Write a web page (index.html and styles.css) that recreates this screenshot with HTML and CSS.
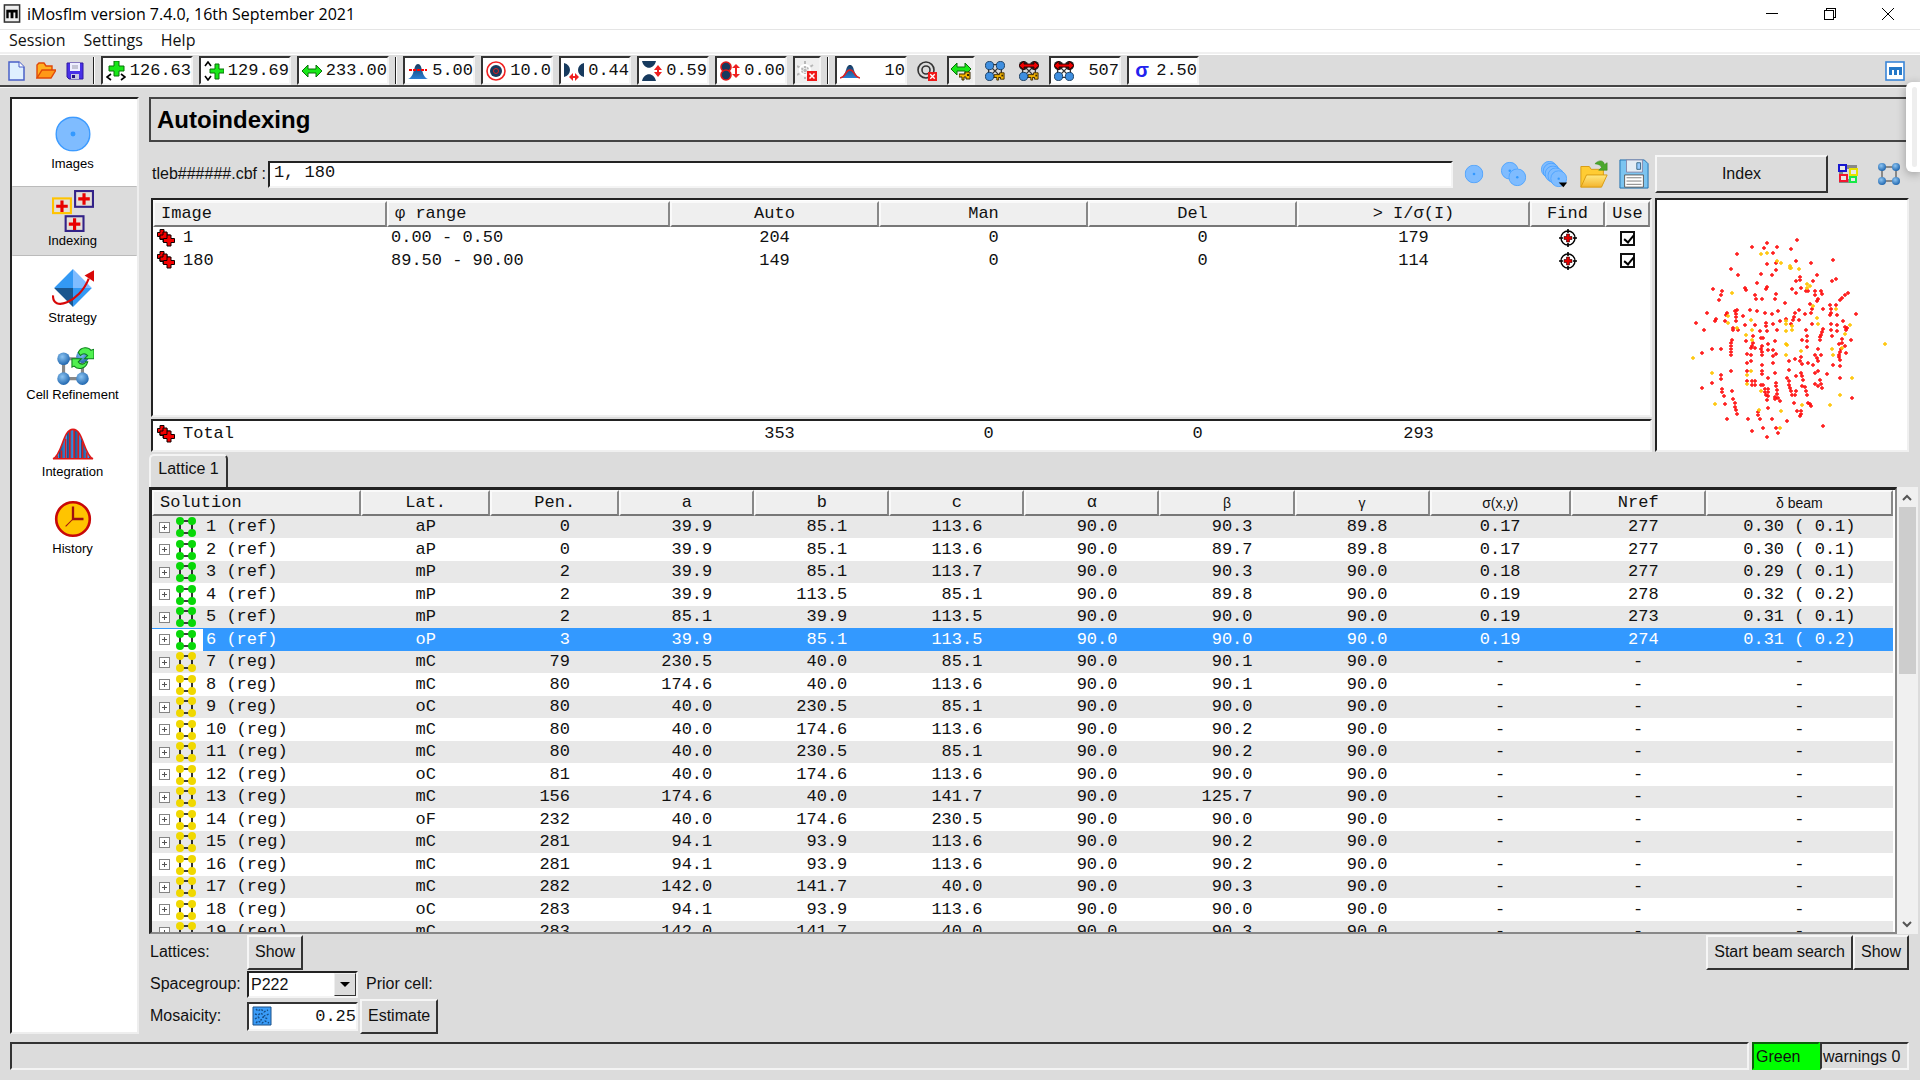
FILE: index.html
```html
<!DOCTYPE html>
<html lang="en">
<head>
    <meta charset="UTF-8">
    <meta name="viewport" content="width=device-width, initial-scale=1.0">
    <title>iMosflm version 7.4.0, 16th September 2021</title>
    <link rel="stylesheet" href="styles.css">
</head>
<body>
    <!-- Shared icons -->
    <svg class="sprite" aria-hidden="true">
        <defs>
            <radialGradient id="ball" cx="40%" cy="35%" r="65%">
                <stop offset="0" stop-color="#8cc4f2"/>
                <stop offset="1" stop-color="#2268b0"/>
            </radialGradient>
            <linearGradient id="hill" x1="0" y1="0" x2="0" y2="1">
                <stop offset="0" stop-color="#173a5e"/>
                <stop offset="1" stop-color="#2b7fd4"/>
            </linearGradient>
            <linearGradient id="stripes" x1="0" y1="0" x2="7" y2="0" gradientUnits="userSpaceOnUse" spreadMethod="repeat">
                <stop offset="0" stop-color="#1c4a80"/>
                <stop offset="1" stop-color="#3a9cf4"/>
            </linearGradient>
            <linearGradient id="gold" x1="0" y1="0" x2="0" y2="1">
                <stop offset="0" stop-color="#ffe980"/>
                <stop offset="1" stop-color="#f4b42c"/>
            </linearGradient>
        </defs>
        <symbol id="i-spots" viewBox="0 0 18 18">
            <g fill="#f40000" stroke="#100" stroke-width="1">
                <path d="M3 .5h4v3h3v4H7v3H3v-3H.5v-4H3z"/>
                <path d="M6 3h4v3h3v4h-3v3H6v-3H3V6h3z"/>
                <path d="M10 6h4v3.500h3.500v4H14V17h-4v-3.500H6.500v-4H10z"/>
            </g>
        </symbol>
        <symbol id="i-target" viewBox="0 0 18 18">
            <circle cx="9" cy="9" r="7" fill="none" stroke="#000" stroke-width="1.400"/>
            <path d="M9 0v4M9 14v4M0 9h4M14 9h4" stroke="#000" stroke-width="1.600"/>
            <path d="M7.500 5h3v2.500H13v3h-2.500V13h-3v-2.500H5v-3h2.500z" fill="#e00000" stroke="#200" stroke-width=".6"/>
        </symbol>
        <symbol id="i-lattice" viewBox="0 0 20 20">
            <path d="M4 4h12v12H4z" fill="none" stroke="#000" stroke-width="1.600"/>
            <g fill="currentColor"><circle cx="4" cy="4" r="4"/><circle cx="16" cy="4" r="4"/><circle cx="4" cy="16" r="4"/><circle cx="16" cy="16" r="4"/></g>
        </symbol>
        <symbol id="i-plus" viewBox="0 0 11 11">
            <rect x=".5" y=".5" width="10" height="10" fill="#fff" stroke="#848484"/>
            <path d="M3 5.500h5M5.500 3v5" stroke="#555"/>
        </symbol>
        <symbol id="i-disc" viewBox="0 0 36 36">
            <circle cx="18" cy="18" r="17" fill="#7fbcff" stroke="#3d9bff" stroke-width="1.500"/>
            <circle cx="18" cy="18" r="2.500" fill="#3399ff"/>
        </symbol>
        <symbol id="i-cell" viewBox="0 0 22 22">
            <path d="M4 4h14v14H4z" fill="none" stroke="#888" stroke-width="2"/>
            <g fill="url(#ball)"><circle cx="4" cy="4" r="4"/><circle cx="18" cy="4" r="4"/><circle cx="4" cy="18" r="4"/><circle cx="18" cy="18" r="4"/></g>
        </symbol>
        <symbol id="i-key" viewBox="0 0 12 10">
            <path d="M0 3h6V1h5v7H7V6H5v3H3V6H0z" fill="#f4b400" stroke="#3a2800"/>
            <path d="M8 3h2v2H8z" fill="#3a2800"/>
        </symbol>
        <symbol id="i-redx" viewBox="0 0 10 10">
            <path d="M0 0h10v10H0z" fill="#f01818"/>
            <path d="M2.500 2.500l5 5M7.500 2.500l-5 5" stroke="#fff" stroke-width="1.500"/>
        </symbol>
        <symbol id="i-redarrow" viewBox="0 0 20 9">
            <path d="M0 4.500L5 0v3h10V0l5 4.500L15 9V6H5v3z" fill="#f00000" stroke="#300"/>
        </symbol>
    </svg>

    <header class="titlebar">
        <svg class="app-icon" viewBox="0 0 18 20"><rect x="1" y="1" width="16" height="18" fill="#eee" stroke="#333" stroke-width="1.600"/><path d="M3 6h12v9h-2.500V9h-2v6h-3V9h-2v6H3z"/></svg>
        <span class="title">iMosflm version 7.4.0, 16th September 2021</span>
        <div class="window-buttons">
            <button aria-label="Minimize"><svg viewBox="0 0 12 12"><path d="M0 5.500h12"/></svg></button>
            <button aria-label="Restore"><svg viewBox="0 0 12 12"><path d="M.5 2.500h9v9h-9zM2.500 2.500v-2h9v9h-2"/></svg></button>
            <button aria-label="Close"><svg viewBox="0 0 12 12"><path d="M0 0l12 12M12 0L0 12"/></svg></button>
        </div>
    </header>

    <nav class="menubar">
        <a href="#">Session</a>
        <a href="#">Settings</a>
        <a href="#">Help</a>
    </nav>

    <div class="toolbar">
        <div class="file-tools">
            <button aria-label="New"><svg viewBox="0 0 20 20"><path d="M2 1h10l5 5v13H2z" fill="#dff0ff" stroke="#4a60c8" stroke-width="1.500"/><path d="M12 1v5h5" fill="#fff" stroke="#4a60c8"/></svg></button>
            <button aria-label="Open"><svg viewBox="0 0 20 20"><path d="M1 17V4l2-2h5l2 3h6v4" fill="#ffb020" stroke="#e04808" stroke-width="1.400"/><path d="M1 17L6 9h14l-5 8z" fill="#ff9818" stroke="#e04808" stroke-width="1.400"/></svg></button>
            <button aria-label="Save"><svg viewBox="0 0 20 20"><path d="M2 2h16v16H4l-2-2z" fill="#4830e8" stroke="#3018a0"/><path d="M5 2h10v8H5z" fill="#eef"/><path d="M7 5h6M7 7h6" stroke="#99a"/><path d="M6 13h8v5H6z" fill="#c8c8e0"/><path d="M7 14h3v3H7z" fill="#221080"/></svg></button>
        </div>
        <div class="separator"></div>
        <label class="entry wide"><svg viewBox="0 0 20 20"><path d="M8 0h5v5h5v5h-5v5H8v-5H3V5h5z" fill="#18e818" stroke="#087008"/><path d="M5 13l-4 3 4 3M15 13l4 3-4 3" fill="none" stroke="#000" stroke-width="1.600"/></svg><input aria-label="Beam x" value="126.63"></label>
        <label class="entry wide"><svg viewBox="0 0 20 20"><path d="M11 3h4v5h5v4h-5v6h-4v-6H6V8h5z" fill="#18e818" stroke="#087008"/><path d="M1 5l3-4 3 4M1 15l3 4 3-4" fill="none" stroke="#000" stroke-width="1.600"/></svg><input aria-label="Beam y" value="129.69"></label>
        <label class="entry wide"><svg viewBox="0 0 20 20"><path d="M0 10l6-6v4h8V4l6 6-6 6v-4H6v4z" fill="#18e818" stroke="#087008"/></svg><input aria-label="Distance" value="233.00"></label>
        <div class="separator"></div>
        <label class="entry"><svg viewBox="0 0 20 20"><path d="M0 18c7-2 5-15 10-15s3 13 10 15z" fill="url(#hill)"/><path d="M1 9h18" stroke="#f00" stroke-width="2" stroke-dasharray="3 1"/></svg><input aria-label="Threshold" value="5.00"></label>
        <label class="entry"><svg viewBox="0 0 20 20"><circle cx="10" cy="10" r="9" fill="#fff" stroke="#f02020" stroke-width="1.600"/><circle cx="10" cy="10" r="6" fill="#173a5e"/><circle cx="10" cy="10" r="2.500" fill="none" stroke="#e02020"/></svg><input aria-label="Radius" value="10.0"></label>
        <label class="entry"><svg viewBox="0 0 20 20"><path d="M0 2c8 2 8 12 0 14zM20 2c-8 2-8 12 0 14z" fill="#173a5e"/><path d="M5 16l4-4v3h2v-3l4 4-4 4v-3H9v3z" fill="#f02020"/></svg><input aria-label="Separation x" value="0.44"></label>
        <label class="entry"><svg viewBox="0 0 20 20"><path d="M0 0h14c-2 9-12 9-14 0zM0 20h14c-2-9-12-9-14 0z" fill="#173a5e"/><path d="M16 4l4 5h-3v2h3l-4 5-4-5h3V9h-3z" fill="#f02020"/></svg><input aria-label="Separation y" value="0.59"></label>
        <label class="entry"><svg viewBox="0 0 20 20"><g fill="#173a5e" stroke="#e01818" stroke-width="1.600"><circle cx="6" cy="6" r="5"/><circle cx="6" cy="14" r="5"/></g><path d="M16 3l4 4h-3v6h3l-4 4-4-4h3V7h-3z" fill="#f02020"/></svg><input aria-label="Overlap" value="0.00"></label>
        <button class="tool pressed" aria-label="Ice rings"><svg viewBox="0 0 20 20"><g stroke="#b8b8b8" stroke-width="2" stroke-dasharray="3 1"><path d="M8 0v18M0 5l16 9M16 4L0 14"/></g><circle cx="8" cy="9" r="5" fill="none" stroke="#fff" stroke-width="2"/><use href="#i-redx" x="10" y="10" width="10" height="10"/></svg></button>
        <div class="separator"></div>
        <label class="entry"><svg viewBox="0 0 20 20"><path d="M0 17c7-2 5-13 10-13s3 11 10 13z" fill="url(#hill)"/><path d="M0 17c7-2 5-8 10-8s3 6 10 8" fill="none" stroke="#e02020" stroke-width="1.600"/></svg><input aria-label="Spot count" value="10"></label>
        <button class="tool" aria-label="Rings"><svg viewBox="0 0 20 20"><circle cx="9" cy="9" r="8" fill="none" stroke="#333" stroke-width="1.600"/><circle cx="9" cy="9" r="4" fill="none" stroke="#333" stroke-width="1.600"/><use href="#i-redx" x="11" y="11" width="9" height="9"/></svg></button>
        <button class="tool pressed" aria-label="Fix distance"><svg viewBox="0 0 20 20"><path d="M0 8l6-6v4h8V2l6 6-6 6v-4H6v4z" fill="#18e818" stroke="#087008"/><use href="#i-key" x="8" y="10" width="12" height="10"/></svg></button>
        <button class="tool" aria-label="Fix cell"><svg viewBox="0 0 22 22"><path d="M4 4h14v14H4zM4 4l14 14M4 18L18 4" fill="none" stroke="#333" stroke-width="1.500"/><g fill="#3f8fe0" stroke="#173a5e"><circle cx="5" cy="5" r="4.500"/><circle cx="17" cy="5" r="4.500"/><circle cx="5" cy="17" r="4.500"/></g><use href="#i-key" x="10" y="12" width="12" height="10"/></svg></button>
        <button class="tool" aria-label="Fix max cell"><svg viewBox="0 0 22 22"><path d="M4 4h14v14H4zM4 4l14 14M4 18L18 4" fill="none" stroke="#333" stroke-width="1.500"/><g fill="#3f8fe0" stroke="#173a5e"><circle cx="5" cy="17" r="4.500"/></g><g fill="#222"><circle cx="5" cy="5" r="5"/><circle cx="17" cy="5" r="5"/></g><use href="#i-redarrow" x="0" y="0" width="22" height="10"/><use href="#i-key" x="10" y="12" width="12" height="10"/></svg></button>
        <label class="entry"><svg viewBox="0 0 22 22"><path d="M4 4h14v14H4zM4 4l14 14M4 18L18 4" fill="none" stroke="#333" stroke-width="1.500"/><g fill="#3f8fe0" stroke="#173a5e"><circle cx="5" cy="17" r="4.500"/><circle cx="17" cy="17" r="4.500"/></g><g fill="#222"><circle cx="5" cy="5" r="5"/><circle cx="17" cy="5" r="5"/></g><use href="#i-redarrow" x="0" y="0" width="22" height="10"/></svg><input aria-label="Max cell edge" value="507"></label>
        <label class="entry"><span class="sigma">σ</span><input aria-label="Sigma cutoff" value="2.50"></label>
        <svg class="mosflm-logo" viewBox="0 0 20 20"><rect x="1" y="1" width="18" height="18" fill="#fff" stroke="#3a86d8" stroke-width="1.600"/><path d="M4 6h13v8h-3V9h-2v5H9V9H7v5H4z" fill="#2478c8"/></svg>
    </div>

    <div class="workspace">
        <nav class="sidebar">
            <a class="stage" href="#"><svg viewBox="0 0 40 40"><use href="#i-disc" x="3" y="3" width="34" height="34"/></svg>Images</a>
            <a class="stage active" href="#"><svg viewBox="0 0 40 40"><g fill="#e4dfd8" stroke-width="2"><rect x="1" y="8" width="17" height="14" stroke="#ffc400"/><rect x="22" y="1" width="17" height="15" stroke="#332288"/><rect x="13" y="25" width="17" height="14" stroke="#332288"/></g><path d="M8 10h3v4h4v3h-4v4H8v-4H4v-3h4zM29 3h3v4h4v3h-4v4h-3v-4h-4V7h4zM20 27h3v4h4v3h-4v4h-3v-4h-4v-3h4z" fill="#e80000"/></svg>Indexing</a>
            <a class="stage" href="#"><svg viewBox="0 0 40 40"><path d="M20 2L2 20h18z" fill="#3399f4"/><path d="M20 2v18h18z" fill="#7fbcff"/><path d="M2 20h18v18z" fill="#1a568e"/><path d="M20 20h18L20 38z" fill="#3399f4"/><path d="M1 27c-1 16 25 7 34-16" fill="none" stroke="#d80808" stroke-width="2"/><path d="M40 3v11l-9-6z" fill="#d80808"/></svg>Strategy</a>
            <a class="stage" href="#"><svg viewBox="0 0 40 40"><path d="M11 14h18v19H11z" fill="none" stroke="#888" stroke-width="3"/><g fill="url(#ball)"><circle cx="11" cy="14" r="6"/><circle cx="29" cy="12" r="6"/><circle cx="11" cy="33" r="6"/><circle cx="29" cy="33" r="6"/></g><path d="M25 8c3-6 10-5 12-2l3-1v9h-9l3-3c-3-3-5-2-7 0zM34 17c-2 7-9 8-13 4l-2 1v-8h9l-3 3c2 3 6 3 7 0z" fill="#50f050" stroke="#088018"/></svg>Cell Refinement</a>
            <a class="stage" href="#"><svg viewBox="0 0 40 40"><path d="M1 36c9-4 9-28 19-28s10 24 19 28z" fill="url(#stripes)" stroke="#e01818" stroke-width="1.500"/><path d="M5 36v-3M9 36v-8M13 36V17M17 36V9M21 36V8M25 36V11M29 36V20M33 36v-6" stroke="#e01818" stroke-width="1.500"/></svg>Integration</a>
            <a class="stage" href="#"><svg viewBox="0 0 40 40"><circle cx="20" cy="20" r="16" fill="#ffc400" stroke="#c80808" stroke-width="2.500"/><path d="M20 8v12h10" fill="none" stroke="#a01010" stroke-width="2.200"/><path d="M20 20l-7 7" stroke="#a01010"/></svg>History</a>
        </nav>

        <main>
            <h1>Autoindexing</h1>

            <div class="image-bar">
                <label for="images">tleb######.cbf :</label>
                <input id="images" value="1, 180">
                <div class="image-tools">
                    <button aria-label="Pick one image"><svg viewBox="0 0 32 32"><use href="#i-disc" x="6" y="6" width="20" height="20"/></svg></button>
                    <button aria-label="Pick two images"><svg viewBox="0 0 32 32"><use href="#i-disc" x="2" y="3" width="19" height="19"/><use href="#i-disc" x="10" y="10" width="19" height="19"/></svg></button>
                    <button aria-label="Pick several images"><svg viewBox="0 0 32 32"><use href="#i-disc" x="2" y="2" width="18" height="18"/><use href="#i-disc" x="4" y="4" width="18" height="18"/><use href="#i-disc" x="6" y="7" width="18" height="18"/><use href="#i-disc" x="9" y="9" width="18" height="18"/><use href="#i-disc" x="12" y="12" width="18" height="18"/><path d="M21 25h9l-4 5z"/></svg></button>
                    <button aria-label="Load spots"><svg viewBox="0 0 32 32"><path d="M2 30V8h9l2 3h13v7" fill="#ffcc33" stroke="#d89a10"/><path d="M2 30l6-13h22l-6 13z" fill="url(#gold)" stroke="#d89a10"/><path d="M17 5c5-5 10-3 10 1l3-2v8h-9l3-3c-1-3-3-3-7-4z" fill="#4aa82c" stroke="#38841c" stroke-width=".6"/></svg></button>
                    <button aria-label="Save spots"><svg viewBox="0 0 32 32"><path d="M1 1h26l4 4v26H1z" fill="#7cc4f0" stroke="#1d6eae"/><path d="M8 1h17v13H8z" fill="#e4ecf4" stroke="#88a"/><path d="M19 4h4v7h-4z" fill="#9cf" stroke="#368"/><path d="M6 17h20v13H6z" fill="#fff" stroke="#555"/><path d="M8 20h16M8 23.500h16M8 27h16" stroke="#777"/></svg></button>
                </div>
                <div class="index-tools">
                    <button class="raised index">Index</button>
                    <button aria-label="Multiple lattices"><svg viewBox="0 0 22 22"><path d="M4 4h14v14H4z" fill="none" stroke="#888" stroke-width="4"/><g fill="#e8e8e8" stroke-width="2"><rect x="2" y="2" width="7" height="6" stroke="#1818d0"/><rect x="13" y="6" width="7" height="6" stroke="#e8e000"/><rect x="3" y="12" width="7" height="6" stroke="#f01830"/><rect x="13" y="14" width="6" height="5" stroke="#18e848"/></g></svg></button>
                    <button class="cell-options" aria-label="Cell options"><svg viewBox="0 0 22 22"><use href="#i-cell" x="0" y="0" width="22" height="22"/></svg></button>
                </div>
            </div>

            <section class="spots">
                <div class="image-lists">
                    <div class="sunken image-list">
                        <table>
                            <colgroup><col class="w234"><col class="w283"><col class="w209"><col class="w209"><col class="w209"><col class="w233"><col class="w75"><col class="w45"></colgroup>
                            <thead><tr><th class="left">Image</th><th class="left">φ range</th><th>Auto</th><th>Man</th><th>Del</th><th>&gt; I/σ(I)</th><th>Find</th><th>Use</th></tr></thead>
                            <tbody>
                                <tr><td class="image"><svg><use href="#i-spots"/></svg>1</td><td class="left">0.00 - 0.50</td><td>204</td><td>  0</td><td>  0</td><td>179</td><td><svg><use href="#i-target"/></svg></td><td><input type="checkbox" aria-label="Use image 1" checked></td></tr>
                                <tr><td class="image"><svg><use href="#i-spots"/></svg>180</td><td class="left">89.50 - 90.00</td><td>149</td><td>  0</td><td>  0</td><td>114</td><td><svg><use href="#i-target"/></svg></td><td><input type="checkbox" aria-label="Use image 180" checked></td></tr>
                            </tbody>
                        </table>
                    </div>
                    <div class="sunken total">
                        <table>
                            <colgroup><col class="w239"><col class="w283"><col class="w209"><col class="w209"><col class="w209"><col class="w233"><col class="w75"><col class="w40"></colgroup>
                            <tbody><tr><td class="image"><svg><use href="#i-spots"/></svg>Total</td><td></td><td>353</td><td>0</td><td>0</td><td>293</td><td></td><td></td></tr></tbody>
                        </table>
                    </div>
                </div>
                <div class="sunken plot">
                    <svg viewBox="0 0 250 250">
                        <path id="spots-used" fill="#ff1010"/>
                        <path id="spots-weak" fill="#ffc400"/>
                    </svg>
                </div>
            </section>

            <div class="tabs"><button class="tab">Lattice 1</button></div>

            <section class="solutions">
                <div class="solution-list">
                    <table>
                        <colgroup><col class="w209"><col class="w129"><col class="w129"><col class="w135"><col class="w135"><col class="w135"><col class="w135"><col class="w135"><col class="w135"><col class="w141"><col class="w135"><col class="w187"></colgroup>
                        <thead><tr><th class="left">Solution</th><th>Lat.</th><th>Pen.</th><th>a</th><th>b</th><th>c</th><th>α</th><th class="sans">β</th><th class="sans">γ</th><th class="sans">σ(x,y)</th><th>Nref</th><th class="sans">δ beam</th></tr></thead>
                        <tbody id="solutions"></tbody>
                    </table>
                </div>
                <div class="scrollbar">
                    <svg viewBox="0 0 20 20"><path d="M6 13l4-4 4 4"/></svg>
                    <div class="track"><div class="thumb"></div></div>
                    <svg viewBox="0 0 20 20"><path d="M6 8l4 4 4-4"/></svg>
                </div>
            </section>

            <div class="options">
                <div class="option-row">
                    <span class="caption">Lattices:</span>
                    <button class="raised">Show</button>
                    <div class="beam-search"><button class="raised">Start beam search</button><button class="raised">Show</button></div>
                </div>
                <div class="option-row short">
                    <label class="caption" for="spacegroup">Spacegroup:</label>
                    <div class="combo"><select id="spacegroup"><option>P222</option></select></div>
                    <span class="prior">Prior cell:</span>
                </div>
                <div class="option-row">
                    <label class="caption" for="mosaicity">Mosaicity:</label>
                    <div class="entry mosaicity"><svg viewBox="0 0 20 20"><path d="M1 1h18v18H1z" fill="#3a9cf8" stroke="#1a5088"/><path d="M4 3l2 2 3-2 3 3 4-2M3 8l3 1 3-2 3 3 5-2M3 13l3-2 3 3 2-3 5 2M4 17l2-2 4 2 3-2 4 2" fill="none" stroke="#174f88" stroke-dasharray="2 1.500" stroke-width="1.400"/></svg><input id="mosaicity" value="0.25"></div>
                    <button class="raised">Estimate</button>
                </div>
            </div>
        </main>
    </div>

    <footer class="statusbar">
        <div class="message"></div>
        <div class="light">Green</div>
        <div class="warnings">warnings 0</div>
    </footer>

    <div class="handle"></div>

    <script src="script.js"></script>
</body>
</html>
```
FILE: styles.css
```css
* {
    box-sizing: border-box;
}

body {
    margin: 0;
    height: 100vh;
    display: flex;
    flex-direction: column;
    background: #dcdcdc;
    color: #111;
    font-family: "Liberation Sans", Arial, sans-serif;
    font-size: 16px;
    overflow: hidden;
}

button, input, select {
    font: inherit;
    color: inherit;
    padding: 0;
    margin: 0;
    border: none;
    background: none;
    border-radius: 0;
    outline: none;
}

a {
    color: inherit;
    text-decoration: none;
}

svg {
    display: block;
    flex: none;
}

.sprite {
    position: absolute;
    width: 0;
    height: 0;
}

/* Title and menus */
.titlebar {
    display: flex;
    align-items: center;
    height: 30px;
    padding: 0 3px 2px;
    background: #fff;
    border-bottom: 1px solid #e5e5e5;
    font-family: "Open Sans", sans-serif;
    font-size: 16px;
    line-height: 24px;
    color: #000;
}

.app-icon {
    width: 18px;
    height: 19px;
    margin-right: 6px;
}

.window-buttons {
    display: flex;
    margin-left: auto;
}

.window-buttons button {
    width: 58px;
    height: 26px;
    display: flex;
    align-items: center;
    justify-content: center;
}

.window-buttons svg {
    width: 12px;
    height: 12px;
    fill: none;
    stroke: #000;
    shape-rendering: crispEdges;
}

.menubar {
    display: flex;
    align-items: center;
    gap: 18px;
    height: 24px;
    padding: 0 9px 2px;
    background: #fff;
    border-bottom: 2px solid #f0f0f0;
    font-family: "Open Sans", sans-serif;
    font-size: 16px;
    line-height: 20px;
}

/* Toolbar */
.toolbar {
    display: flex;
    align-items: center;
    gap: 6px;
    height: 33px;
    padding: 1px 15px 0 7px;
    border-top: 1px solid #fff;
    border-bottom: 2px solid #444;
    box-shadow: 0 1px #f8f8f8;
}

.file-tools {
    display: flex;
    gap: 9px;
    margin-right: 2px;
}

.toolbar svg {
    width: 20px;
    height: 20px;
}

.separator {
    width: 2px;
    height: 27px;
    background: #222;
    border-right: 1px solid #fff;
}

.entry {
    display: flex;
    align-items: center;
    width: 72px;
    height: 29px;
    padding: 0 0 0 3px;
    background: #fff;
    border: 2px solid;
    border-color: #333 #f4f4f4 #f4f4f4 #333;
}

.entry.wide {
    width: 92px;
}

.entry input {
    flex: 1;
    min-width: 0;
    text-align: right;
    font-family: "Liberation Mono", monospace;
    font-size: 17px;
}

.sigma {
    width: 20px;
    text-align: center;
    font-weight: bold;
    font-size: 20px;
    color: #2222ee;
}

.tool {
    width: 28px;
    height: 29px;
    display: flex;
    align-items: center;
    justify-content: center;
}

.tool.pressed {
    background: #eee;
    border: 2px solid;
    border-color: #333 #f4f4f4 #f4f4f4 #333;
}

.mosflm-logo {
    margin-left: auto;
}

/* Stages on the left */
.workspace {
    flex: 1;
    min-height: 0;
    display: flex;
    gap: 10px;
    padding: 10px 2px 0 10px;
}

.sidebar {
    display: flex;
    flex-direction: column;
    gap: 7px;
    width: 129px;
    padding-top: 10px;
    background: #fff;
    border: 2px solid;
    border-color: #222 #eee #eee #222;
}

.stage {
    display: flex;
    flex-direction: column;
    align-items: center;
    height: 70px;
    padding: 3px 4px 0 0;
    border: 1px solid transparent;
    font-size: 13px;
    line-height: 18px;
    color: #000;
}

.stage svg {
    width: 42px;
    height: 42px;
}

.stage.active {
    background: #dcdcdc;
    border-color: #bbb transparent;
}

/* Main pane */
main {
    flex: 1;
    min-width: 0;
    display: flex;
    flex-direction: column;
}

h1 {
    margin: 0 9px 13px 0;
    padding: 0 6px;
    border: 2px solid #444;
    border-right-color: #eee;
    font-size: 24px;
    line-height: 41px;
    color: #000;
}

.image-bar {
    display: flex;
    align-items: center;
    margin: 0 9px 5px 3px;
    height: 38px;
}

#images {
    flex: 1;
    height: 27px;
    margin-left: 2px;
    padding: 0 4px 4px;
    background: #fff;
    border: 2px solid;
    border-color: #222 #f4f4f4 #f4f4f4 #222;
    font-family: "Liberation Mono", monospace;
    font-size: 17px;
}

.image-tools {
    display: flex;
    justify-content: space-between;
    width: 190px;
    margin: 0 6px;
}

.image-tools svg {
    width: 30px;
    height: 30px;
}

.index-tools {
    display: flex;
    align-items: center;
    gap: 9px;
    width: 254px;
}

.index-tools svg {
    width: 22px;
    height: 22px;
}

.cell-options {
    margin-left: 10px;
}

.raised {
    height: 35px;
    padding: 0 6px;
    background: #dcdcdc;
    border: 2px solid;
    border-color: #f6f6f6 #333 #333 #f6f6f6;
}

.raised.index {
    width: 173px;
    height: 38px;
}

.sunken {
    background: #fff;
    border: 2px solid;
    border-color: #222 #f0f0f0 #f0f0f0 #222;
}

.spots {
    display: grid;
    grid-template-columns: 1fr 254px;
    gap: 3px;
    margin: 0 9px 2px 2px;
    height: 254px;
}

.image-lists {
    display: flex;
    flex-direction: column;
    gap: 2px;
    min-width: 0;
}

.image-list {
    flex: 1;
    padding-top: 1px;
}

.total {
    height: 33px;
    padding-top: 2px;
}

.plot svg {
    width: 100%;
}

table {
    width: 100%;
    table-layout: fixed;
    border-collapse: separate;
    border-spacing: 0;
    font-family: "Liberation Mono", monospace;
    font-size: 17px;
    line-height: 22px;
}

.w40 { width: 40px; }
.w45 { width: 45px; }
.w75 { width: 75px; }
.w129 { width: 129px; }
.w135 { width: 135px; }
.w141 { width: 141px; }
.w187 { width: 187px; }
.w209 { width: 209px; }
.w233 { width: 233px; }
.w234 { width: 234px; }
.w239 { width: 239px; }
.w283 { width: 283px; }

th {
    height: 26px;
    padding: 0;
    background: #efefef;
    border: 2px solid;
    border-color: #fafafa #888 #777 #fafafa;
    font-weight: normal;
}

th.left {
    text-align: left;
    padding-left: 6px;
}

th.sans {
    font-family: "Liberation Sans", Arial, sans-serif;
    font-size: 14px;
}

td {
    height: 22px;
    padding: 0;
    text-align: center;
    white-space: pre;
}

tbody tr:nth-child(even) td {
    height: 23px;
}

td.left {
    text-align: left;
    padding-left: 4px;
}

td svg {
    width: 18px;
    height: 18px;
    margin: 0 auto;
}

.image {
    text-align: left;
}

.image svg {
    display: inline-block;
    vertical-align: middle;
    margin: 0 8px 0 4px;
}

input[type="checkbox"] {
    appearance: none;
    display: block;
    width: 15px;
    height: 15px;
    margin: 0 auto;
    border: 2px solid #111;
    background: #fff;
}

input[type="checkbox"]:checked::before {
    content: "";
    display: block;
    width: 4px;
    height: 8px;
    margin: 0 0 0 4px;
    border: solid #000;
    border-width: 0 2px 2px 0;
    transform: rotate(40deg);
}

/* Solutions */
.tabs {
    display: flex;
    height: 33px;
}

.tab {
    width: 79px;
    border: 2px solid;
    border-color: #f4f4f4 #333 transparent #f4f4f4;
    border-bottom: none;
    border-radius: 5px 5px 0 0;
    padding-bottom: 5px;
}

.solutions {
    flex: 1;
    min-height: 0;
    display: flex;
}

.solution-list {
    flex: 1;
    min-width: 0;
    overflow: hidden;
    background: #fff;
    border: 2px solid;
    border-color: #222 #888 #888 #222;
    border-width: 3px 2px 2px 3px;
    padding-right: 2px;
}

#solutions tr:nth-child(odd) {
    background: #e8e8e8;
}

#solutions tr.selected {
    background: #3399ff;
    color: #fff;
}

.solution {
    text-align: left;
}

.solution div {
    display: flex;
    align-items: center;
    height: 22px;
}

.tree {
    display: flex;
    align-items: center;
    gap: 6px;
    width: 51px;
    height: 22px;
    padding-left: 7px;
    margin-right: 3px;
}

.selected .tree {
    background: #fff;
}

.tree svg {
    width: 20px;
    height: 20px;
    margin: 0;
}

.tree .expand {
    width: 11px;
    height: 11px;
}

.refined {
    color: #08d808;
}

.regular {
    color: #f0d800;
}

.scrollbar {
    display: flex;
    flex-direction: column;
    width: 21px;
    background: #f0f0f0;
}

.scrollbar svg {
    width: 20px;
    height: 20px;
    fill: none;
    stroke: #555;
    stroke-width: 2;
}

.track {
    flex: 1;
    padding: 0 2px;
}

.thumb {
    height: 41%;
    background: #cdcdcd;
}

/* Options under the solutions */
.options {
    margin: 0 9px 0 1px;
}

.option-row {
    display: flex;
    align-items: center;
    height: 36px;
}

.option-row.short {
    height: 28px;
}

.caption {
    width: 97px;
}

.beam-search {
    display: flex;
    margin-left: auto;
}

.combo {
    position: relative;
    width: 111px;
    height: 27px;
    background: #fff;
    border: 2px solid;
    border-color: #222 #f4f4f4 #f4f4f4 #222;
}

.combo select {
    appearance: none;
    width: 100%;
    height: 100%;
    padding-left: 2px;
}

.combo::after {
    content: "";
    position: absolute;
    right: 0;
    top: 0;
    bottom: 0;
    width: 20px;
    background: #dcdcdc;
    border: 1px solid;
    border-color: #eee #333 #333 #eee;
    pointer-events: none;
}

.combo::before {
    content: "";
    position: absolute;
    right: 6px;
    top: 9px;
    z-index: 1;
    border: 5px solid transparent;
    border-top-color: #000;
    border-bottom: none;
    pointer-events: none;
}

.prior {
    margin-left: 8px;
}

.mosaicity {
    width: 111px;
    margin-right: 2px;
}

.mosaicity svg {
    width: 20px;
    height: 20px;
}

/* Status bar */
.statusbar {
    display: flex;
    height: 46px;
    padding: 8px 11px 10px 10px;
    line-height: 26px;
}

.statusbar div {
    border: 2px solid;
    border-color: #333 #f4f4f4 #f4f4f4 #333;
}

.message {
    flex: 1;
    margin-right: 3px;
}

.light {
    width: 68px;
    padding-left: 2px;
    background: #00ff00;
}

.statusbar .light {
    border-color: #0a600a #0f0 #0f0 #0a600a;
}

.warnings {
    width: 89px;
    padding-left: 1px;
    white-space: nowrap;
}

/* Handle docked at the screen edge, over the window */
.handle {
    position: absolute;
    right: 0;
    top: 82px;
    width: 14px;
    height: 90px;
    background: #fff;
    border-radius: 6px 0 0 6px;
    box-shadow: 0 2px 10px rgba(0, 0, 0, 0.3);
}

.handle::before {
    content: "";
    position: absolute;
    left: 6px;
    top: 5px;
    width: 5px;
    height: 80px;
    border-radius: 3px;
    background: #eee;
}
```
FILE: script.js
```js
// number, kind, lattice, penalty, a, b, c, alpha, beta, gamma, sigma, nref, beam
const solutions = [
    [1, 'ref', 'aP', 0, '39.9', '85.1', '113.6', '90.0', '90.3', '89.8', '0.17', 277, '0.30 ( 0.1)'],
    [2, 'ref', 'aP', 0, '39.9', '85.1', '113.6', '90.0', '89.7', '89.8', '0.17', 277, '0.30 ( 0.1)'],
    [3, 'ref', 'mP', 2, '39.9', '85.1', '113.7', '90.0', '90.3', '90.0', '0.18', 277, '0.29 ( 0.1)'],
    [4, 'ref', 'mP', 2, '39.9', '113.5', '85.1', '90.0', '89.8', '90.0', '0.19', 278, '0.32 ( 0.2)'],
    [5, 'ref', 'mP', 2, '85.1', '39.9', '113.5', '90.0', '90.0', '90.0', '0.19', 273, '0.31 ( 0.1)'],
    [6, 'ref', 'oP', 3, '39.9', '85.1', '113.5', '90.0', '90.0', '90.0', '0.19', 274, '0.31 ( 0.2)'],
    [7, 'reg', 'mC', 79, '230.5', '40.0', '85.1', '90.0', '90.1', '90.0'],
    [8, 'reg', 'mC', 80, '174.6', '40.0', '113.6', '90.0', '90.1', '90.0'],
    [9, 'reg', 'oC', 80, '40.0', '230.5', '85.1', '90.0', '90.0', '90.0'],
    [10, 'reg', 'mC', 80, '40.0', '174.6', '113.6', '90.0', '90.2', '90.0'],
    [11, 'reg', 'mC', 80, '40.0', '230.5', '85.1', '90.0', '90.2', '90.0'],
    [12, 'reg', 'oC', 81, '40.0', '174.6', '113.6', '90.0', '90.0', '90.0'],
    [13, 'reg', 'mC', 156, '174.6', '40.0', '141.7', '90.0', '125.7', '90.0'],
    [14, 'reg', 'oF', 232, '40.0', '174.6', '230.5', '90.0', '90.0', '90.0'],
    [15, 'reg', 'mC', 281, '94.1', '93.9', '113.6', '90.0', '90.2', '90.0'],
    [16, 'reg', 'mC', 281, '94.1', '93.9', '113.6', '90.0', '90.2', '90.0'],
    [17, 'reg', 'mC', 282, '142.0', '141.7', '40.0', '90.0', '90.3', '90.0'],
    [18, 'reg', 'oC', 283, '94.1', '93.9', '113.6', '90.0', '90.0', '90.0'],
    [19, 'reg', 'mC', 283, '142.0', '141.7', '40.0', '90.0', '90.3', '90.0']
];
const selected = 6;

function solutionRow(s) {
    const [number, kind, lattice, penalty, ...rest] = s;
    const cell = rest.slice(0, 6).map(v => `<td>${v.padStart(5)}</td>`).join('');
    const fit = rest.length > 6
        ? `<td>${rest[6]}</td><td>${String(rest[7]).padStart(4)}</td><td>${rest[8]}</td>`
        : '<td>-</td><td>-</td><td>-</td>';
    return `<tr class="${number === selected ? 'selected' : ''}">
        <td class="solution"><div><span class="tree"><svg class="expand"><use href="#i-plus"/></svg><svg class="${kind === 'ref' ? 'refined' : 'regular'}"><use href="#i-lattice"/></svg></span>${number} (${kind})</div></td>
        <td>${lattice}</td><td>${String(penalty).padStart(3)}</td>${cell}${fit}</tr>`;
}

document.getElementById('solutions').innerHTML = solutions.map(solutionRow).join('');

// Spot positions, in thirds of a plot unit
const used = [
    470,149, 380,157, 335,168, 410,168, 370,172, 452,175, 399,187, 290,190, 579,209, 467,212, 512,216, 406,217,
    380,220, 271,235, 406,239, 361,250, 395,254, 294,254, 530,254, 478,258, 478,267, 467,272, 519,272, 575,272,
    587,265, 350,276, 380,288, 377,295, 455,295, 482,291, 219,295, 313,291, 316,298, 245,302, 241,314, 237,329,
    467,306, 497,302, 504,302, 523,302, 541,302, 545,310, 523,314, 624,306, 613,314, 605,321, 598,329, 343,314,
    347,325, 365,325, 406,310, 403,325, 534,325, 530,332, 433,336, 508,340, 568,344, 587,344, 549,355, 515,355,
    511,366, 571,355, 571,366, 568,374, 590,374, 647,370, 328,358, 350,362, 373,366, 395,370, 414,362, 290,358,
    284,362, 287,370, 286,380, 286,390, 260,368, 257,374, 309,377, 200,366, 226,385, 223,392, 253,392, 167,396,
    475,358, 463,368, 460,380, 457,388, 452,400, 475,388, 493,370, 436,385, 418,392, 377,398, 377,407, 399,400,
    313,404, 343,404, 279,412, 279,418, 294,418, 358,422, 380,422, 410,418, 190,418, 515,400, 497,418, 549,415,
    545,424, 541,433, 538,440, 538,448, 571,400, 571,418, 590,404, 590,422, 609,392, 613,408, 620,411, 617,418,
    575,437, 605,446, 632,448, 605,456, 595,460, 613,467, 602,475, 600,485, 597,492, 597,500, 598,508, 617,486,
    598,527, 579,523, 598,561, 500,437, 500,452, 500,470, 485,448, 362,441, 369,441, 339,437, 317,452, 339,456,
    384,460, 403,452, 335,467, 332,473, 343,473, 365,467, 362,475, 384,478, 399,478, 406,490, 399,497, 275,449,
    271,457, 271,465, 271,475, 271,484, 271,493, 215,475, 242,475, 185,486, 320,490, 332,493, 332,512, 320,516,
    365,484, 365,493, 365,523, 399,516, 534,475, 523,493, 541,493, 530,502, 534,512, 482,498, 463,505, 445,512,
    478,512, 485,520, 504,516, 519,523, 534,542, 523,546, 560,550, 445,538, 482,546, 486,555, 489,568, 467,557,
    403,546, 365,542, 365,550, 384,561, 271,542, 320,542, 242,553, 242,565, 215,576, 185,591, 320,572, 335,572,
    343,572, 335,583, 343,583, 362,583, 369,584, 373,595, 384,595, 373,605, 384,605, 377,614, 384,616, 380,628,
    406,576, 406,587, 410,598, 410,609, 403,618, 403,625, 414,621, 418,632, 441,561, 445,572, 445,583, 448,593,
    451,602, 456,613, 463,613, 467,602, 485,587, 493,590, 497,602, 500,613, 504,636, 508,640, 512,647, 523,580,
    534,587, 538,568, 541,580, 545,591, 636,621, 245,595, 246,605, 250,617, 253,640, 275,602, 279,625, 283,636,
    284,648, 287,658, 290,670, 260,685, 324,685, 354,663, 354,673, 358,685, 395,685, 384,651, 460,636, 470,662,
    482,662, 482,670, 478,677, 441,692, 549,707, 369,711, 406,711, 414,726, 335,722, 380,738
];
const weak = [
    380,186, 361,190, 410,212, 421,216, 450,227, 448,231, 453,231, 475,235, 500,280, 508,287, 500,291, 275,306,
    519,347, 587,355, 264,377, 264,396, 331,388, 335,418, 290,411, 317,433, 335,448, 436,392, 436,400, 455,407,
    455,418, 436,420, 436,460, 439,463, 436,493, 482,482, 530,381, 534,400, 628,404, 613,430, 606,471, 575,475,
    579,493, 733,460, 159,501, 215,546, 332,542, 320,553, 320,580, 361,602, 223,640, 357,658, 421,662, 418,711,
    485,643, 568,643, 598,613, 636,561
];

function drawSpots(id, points) {
    let d = '';
    for (let i = 0; i < points.length; i += 2) {
        const x = Math.round((points[i] - 50) / 3);
        const y = Math.round((points[i + 1] - 28) / 3);
        d += `M${x - 0.7} ${y - 2}h1.4v1.3h1.3v1.4h-1.3v1.3h-1.4v-1.3h-1.3v-1.4h1.3z`;
    }
    document.getElementById(id).setAttribute('d', d);
}

drawSpots('spots-used', used);
drawSpots('spots-weak', weak);
```
